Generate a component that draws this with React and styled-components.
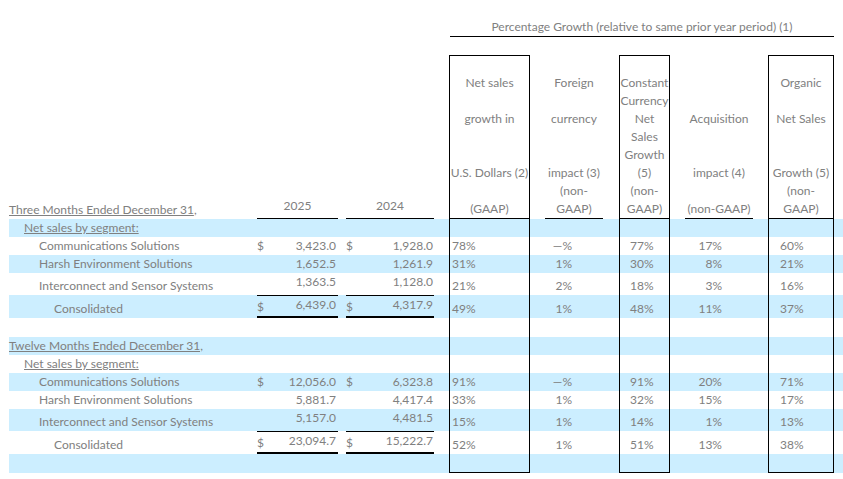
import React from 'react';
import styled, { createGlobalStyle, css } from 'styled-components';

// label | 2025 | gap | 2024 | gap | usd box | fx | cc box | acq | organic box
const COLS = '248px 81px 8px 88px 15px 81px 89px 51px 98px 66px';

const GlobalStyle = createGlobalStyle`
  * { box-sizing: border-box; }
  body {
    margin: 0;
    background: #fff;
    font-family: Lato, 'Open Sans', sans-serif;
    font-size: 12px;
    line-height: 18px;
    color: #808080;
  }
`;

const Page = styled.div`
  padding: 18px 0 0 9px;
`;

const Row = styled.div`
  display: grid;
  grid-template-columns: ${COLS};
  height: ${props => props.$h || 18}px;
  background: ${props => (props.$blue ? '#cceeff' : 'transparent')};
`;

const TitleRow = styled(Row)`
  height: 19px;
  margin-bottom: 18px;
`;

const Title = styled.div`
  grid-column: 6 / 11;
  margin-left: 1px;
  text-align: center;
  white-space: nowrap;
  border-bottom: 1px solid #000;
`;

const HeadRow = styled(Row)`
  height: 164px;
`;

const Label = styled.div`
  align-self: end;
  padding-left: ${props => props.$indent * 15}px;
  white-space: nowrap;
`;

const U = styled.span`
  text-decoration: underline;
`;

const YearHead = styled.div`
  align-self: end;
  text-align: center;
  padding-bottom: 3px;
  border-bottom: 1px solid #000;
`;

const HeadCell = styled.div`
  display: flex;
  flex-direction: column;
  justify-content: flex-end;
  text-align: center;
  white-space: nowrap;
  ${props => props.$box && css`
    border: 1px solid #000;
  `}
`;

const HeadLines = styled.div`
  margin: 0 ${props => props.$mr || 0}px 0 ${props => props.$ml || 0}px;
  ${props => props.$rule && css`
    border-bottom: 1px solid #000;
  `}
`;

const Line = styled.div`
  height: 18px;
`;

const Money = styled.div`
  display: flex;
  padding-right: ${props => props.$pr}px;
  ${props => props.$total && css`
    border-top: 1px solid #000;
    border-bottom: 2px solid #000;
  `}
`;

const Dollar = styled.span`
  align-self: flex-end;
`;

const Amount = styled.span`
  align-self: flex-start;
  margin-left: auto;
`;

const Pct = styled.div`
  display: flex;
  align-items: flex-end;
  justify-content: ${props => (props.$right ? 'flex-end' : 'flex-start')};
  padding-left: ${props => props.$pl || 0}px;
  padding-right: ${props => props.$pr || 0}px;
  ${props => props.$box && css`
    border-left: 1px solid #000;
    border-right: 1px solid #000;
  `}
  ${props => props.$box && props.$last && css`
    border-bottom: 1px solid #000;
  `}
`;

const PCT_COLS = [
  { box: true, pl: 2, lines: ['Net sales', '', 'growth in', '', '', 'U.S. Dollars (2)', '', '(GAAP)'] },
  { right: true, pr: 47, ml: 15, mr: 16, lines: ['Foreign', '', 'currency', '', '', 'impact (3)', '(non-', 'GAAP)'] },
  { box: true, pl: 10, lines: ['Constant', 'Currency', 'Net', 'Sales', 'Growth', '(5)', '(non-', 'GAAP)'] },
  { right: true, pr: 46, ml: 15, mr: 15, lines: ['', '', 'Acquisition', '', '', 'impact (4)', '', '(non-GAAP)'] },
  { box: true, pl: 11, lines: ['Organic', '', 'Net Sales', '', '', 'Growth (5)', '(non-', 'GAAP)'] },
];

const seg = (name, a, b, pcts, extra) => ({ label: name, indent: 2, a, b, pcts, ...extra });

const ROWS = [
  { label: <U>Net sales by segment:</U>, indent: 1, blue: true },
  seg('Communications Solutions', '3,423.0', '1,928.0', ['78%', '—%', '77%', '17%', '60%'], { dollar: true }),
  seg('Harsh Environment Solutions', '1,652.5', '1,261.9', ['31%', '1%', '30%', '8%', '21%'], { blue: true }),
  seg('Interconnect and Sensor Systems', '1,363.5', '1,128.0', ['21%', '2%', '18%', '3%', '16%'], { h: 22 }),
  seg('Consolidated', '6,439.0', '4,317.9', ['49%', '1%', '48%', '11%', '37%'], { indent: 3, h: 23, blue: true, dollar: true, total: true }),
  { h: 19 },
  { label: <U>Twelve Months Ended December 31,</U>, indent: 0, blue: true },
  { label: <U>Net sales by segment:</U>, indent: 1 },
  seg('Communications Solutions', '12,056.0', '6,323.8', ['91%', '—%', '91%', '20%', '71%'], { dollar: true, blue: true }),
  seg('Harsh Environment Solutions', '5,881.7', '4,417.4', ['33%', '1%', '32%', '15%', '17%']),
  seg('Interconnect and Sensor Systems', '5,157.0', '4,481.5', ['15%', '1%', '14%', '1%', '13%'], { h: 22, blue: true }),
  seg('Consolidated', '23,094.7', '15,222.7', ['52%', '1%', '51%', '13%', '38%'], { indent: 3, h: 23, dollar: true, total: true }),
  { h: 19, blue: true, last: true },
];

const MoneyCell = ({ value, dollar, total, pr }) => (
  <Money $pr={pr} $total={total}>
    {dollar && <Dollar>$</Dollar>}
    <Amount>{value}</Amount>
  </Money>
);

export default function App() {
  return (
    <Page>
      <GlobalStyle />
      <TitleRow>
        <Title>Percentage Growth (relative to same prior year period) (1)</Title>
      </TitleRow>

      <HeadRow>
        <Label $indent={0}><U>Three Months Ended December 31</U>,</Label>
        <YearHead>2025</YearHead>
        <div />
        <YearHead>2024</YearHead>
        <div />
        {PCT_COLS.map((c, i) => (
          <HeadCell key={i} $box={c.box}>
            <HeadLines $rule={!c.box} $ml={c.ml} $mr={c.mr}>
              {c.lines.map((l, j) => <Line key={j}>{l || '\u00a0'}</Line>)}
            </HeadLines>
          </HeadCell>
        ))}
      </HeadRow>

      {ROWS.map((r, i) => (
        <Row key={i} $h={r.h} $blue={r.blue}>
          <Label $indent={r.indent || 0}>{r.label}</Label>
          {r.a ? <MoneyCell value={r.a} dollar={r.dollar} total={r.total} pr={2} /> : <div />}
          <div />
          {r.b ? <MoneyCell value={r.b} dollar={r.dollar} total={r.total} pr={1} /> : <div />}
          <div />
          {PCT_COLS.map((c, j) => (
            <Pct key={j} $box={c.box} $last={r.last} $right={c.right} $pl={c.pl} $pr={c.pr}>
              {r.pcts ? r.pcts[j] : ''}
            </Pct>
          ))}
        </Row>
      ))}
    </Page>
  );
}
